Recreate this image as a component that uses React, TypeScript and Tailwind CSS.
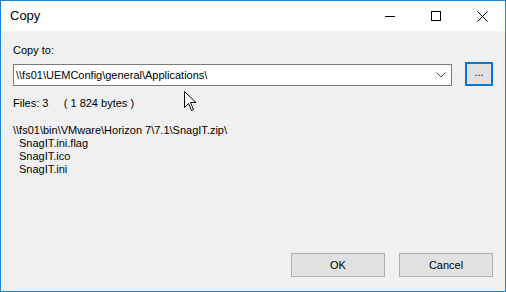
import { useState } from "react";

const font = { fontFamily: '"Liberation Sans", Arial, sans-serif' };

export default function App() {
  const [target] = useState("\\\\fs01\\UEMConfig\\general\\Applications\\");
  const files = ["SnagIT.ini.flag", "SnagIT.ico", "SnagIT.ini"];

  return (
    <div
      className="relative w-[506px] h-[292px] flex flex-col border border-[#1883d7] bg-[#f0f0f0] text-black"
      style={font}
    >
      {/* title bar */}
      <div className="h-[30px] bg-white flex items-center shrink-0">
        <span className="pl-[9px] text-[13px] flex-1">Copy</span>
        <WinButton>
          <div className="w-[10px] h-px bg-black" />
        </WinButton>
        <WinButton>
          <div className="w-[10px] h-[10px] border border-black" />
        </WinButton>
        <WinButton>
          <svg width="11" height="11" viewBox="0 0 11 11">
            <path d="M0.5 0.5 L10.5 10.5 M10.5 0.5 L0.5 10.5" stroke="black" strokeWidth="1" />
          </svg>
        </WinButton>
      </div>

      {/* body */}
      <div className="flex-1 flex flex-col px-3 pt-[13px] pb-[14px] text-[11px] leading-[13px]">
        <label className="mb-[7px]">Copy to:</label>
        <div className="flex items-center gap-[13px]">
          <div className="flex-1 h-[22px] bg-white border border-[#7a7a7a] flex items-center pl-[2px] pr-[5px]">
            <span className="flex-1 text-[11px]">{target}</span>
            <svg width="10" height="6" viewBox="0 0 10 6">
              <path d="M0.5 0.5 L5 5 L9.5 0.5" fill="none" stroke="#555" strokeWidth="1" />
            </svg>
          </div>
          <button className="w-[28px] h-[24px] bg-[#e1e1e1] border-2 border-[#0078d7] flex items-center justify-center text-[11px] pb-[4px] -mt-[2px]">
            ...
          </button>
        </div>

        <p className="mt-[11px]">
          Files: 3&nbsp;&nbsp;&nbsp;&nbsp;&nbsp;( 1 824 bytes )
        </p>

        <div className="mt-[14px]">
          <p>\\fs01\bin\VMware\Horizon 7\7.1\SnagIT.zip\</p>
          {files.map((f) => (
            <p key={f} className="pl-[6px]">
              {f}
            </p>
          ))}
        </div>

        <div className="mt-auto flex justify-end gap-[14px]">
          <DialogButton>OK</DialogButton>
          <DialogButton>Cancel</DialogButton>
        </div>
      </div>

      {/* mouse pointer */}
      <svg
        className="absolute left-[183px] top-[90px]"
        width="13"
        height="21"
        viewBox="0 0 13 21"
      >
        <path
          d="M0.5 0.5 L0.5 16.5 L4.5 12.5 L7.5 19.5 L9.5 18.5 L6.5 11.5 L12 11.5 Z"
          fill="white"
          stroke="black"
          strokeWidth="1"
          strokeLinejoin="miter"
        />
      </svg>
    </div>
  );
}

function WinButton(props: { children: React.ReactNode }) {
  return <div className="w-[46px] h-[30px] flex items-center justify-center">{props.children}</div>;
}

function DialogButton(props: { children: React.ReactNode }) {
  return (
    <button className="w-[94px] h-[24px] bg-[#e1e1e1] border border-[#adadad] text-[11px] flex items-center justify-center">
      {props.children}
    </button>
  );
}
